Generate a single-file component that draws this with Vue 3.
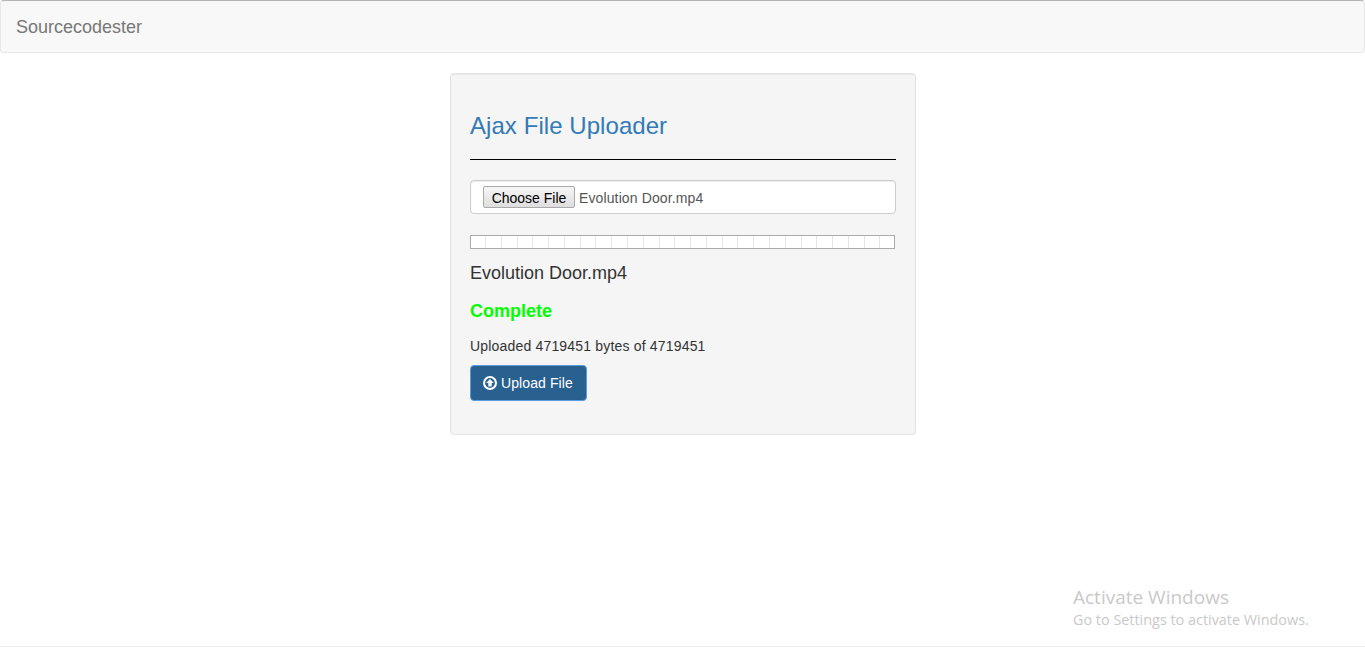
<script setup>
const fileName = 'Evolution Door.mp4'
</script>

<template>
  <div class="page">
    <nav class="navbar"><a class="brand">Sourcecodester</a></nav>
    <main class="content">
      <section class="well">
        <h3 class="title">Ajax File Uploader</h3>
        <hr class="rule" />
        <div class="file-input">
          <button class="choose" type="button">Choose File</button>
          <span class="chosen">{{ fileName }}</span>
        </div>
        <div class="progress"></div>
        <h4 class="name">{{ fileName }}</h4>
        <h4 class="status">Complete</h4>
        <p class="bytes">Uploaded 4719451 bytes of 4719451</p>
        <button class="upload" type="button">
          <svg class="icon" viewBox="0 0 14 14" width="14" height="14" aria-hidden="true">
            <circle cx="7" cy="7" r="5.95" fill="none" stroke="#fff" stroke-width="2.1" />
            <path d="M7 2.9 L10.9 7 L8.7 7 L8.7 10.6 L5.3 10.6 L5.3 7 L3.1 7 Z" fill="#fff" />
          </svg>
          <span>Upload File</span>
        </button>
      </section>
    </main>
    <aside class="activate">
      <div class="a-title">Activate Windows</div>
      <div class="a-sub">Go to Settings to activate Windows.</div>
    </aside>
  </div>
</template>

<style>
html, body { margin: 0; padding: 0; background: #fff; }
</style>

<style scoped>
.page {
  position: relative;
  height: 647px;
  box-sizing: border-box;
  overflow: hidden;
  border-bottom: 1px solid #eee;
  font-family: "Liberation Sans", Arial, sans-serif;
  font-size: 14px;
  color: #333;
  background: #fff;
}
.navbar {
  box-sizing: border-box;
  height: 53px;
  display: flex;
  align-items: center;
  padding: 0 15px;
  background: #f8f8f8;
  border: 1px solid #e7e7e7;
  border-top: 1px solid #b4b4b4;
  border-radius: 4px;
}
.brand { font-size: 18px; color: #777; line-height: 20px; }
.content { display: flex; justify-content: center; padding-top: 20px; padding-left: 1px; }
.well {
  box-sizing: border-box;
  width: 466px;
  height: 362px;
  padding: 19px;
  background: #f5f5f5;
  border: 1px solid #e3e3e3;
  border-radius: 4px;
  box-shadow: inset 0 1px 1px rgba(0,0,0,.05);
}
.title {
  margin: 20px 0 0;
  font-size: 24px;
  font-weight: 500;
  line-height: 26px;
  letter-spacing: .06px;
  color: #337ab7;
}
.rule { margin: 20px 0; height: 1px; border: 0; background: #000; }
.file-input {
  box-sizing: border-box;
  width: 426px;
  height: 34px;
  display: flex;
  align-items: center;
  padding: 6px 12px;
  background: #fff;
  border: 1px solid #ccc;
  border-radius: 4px;
  box-shadow: inset 0 1px 1px rgba(0,0,0,.075);
}
.choose {
  box-sizing: border-box;
  width: 92px;
  height: 22px;
  padding: 1px 0 0;
  font: 14px "Liberation Sans", Arial, sans-serif;
  color: #000;
  background: linear-gradient(#f6f6f6, #dedede);
  border: 1px solid #a9a9a9;
  border-radius: 2px;
}
.chosen { margin-left: 4px; padding-top: 2px; letter-spacing: .12px; color: #555; }
.progress {
  box-sizing: border-box;
  width: 425px;
  height: 14px;
  margin-top: 21px;
  border: 1px solid #aaa;
  background-color: #fff;
  background-image: repeating-linear-gradient(to right, #fff 0, #fff 14px, #e6e6e6 14px, #e6e6e6 15px, #fff 15px, #fff 15.78px);
}
.name { margin: 14px 0 0; font-size: 18px; font-weight: 500; line-height: 20px; color: #333; }
.status { margin: 18px 0 0; font-size: 18px; font-weight: 700; line-height: 20px; color: #0f0; }
.bytes { margin: 15px 0 0; line-height: 20px; letter-spacing: .18px; color: #333; }
.upload {
  box-sizing: border-box;
  display: flex;
  align-items: center;
  gap: 4px;
  width: 117px;
  height: 36px;
  margin-top: 9px;
  padding: 0 12px;
  font: 14px "Liberation Sans", Arial, sans-serif;
  letter-spacing: .1px;
  color: #fff;
  background: #286090;
  border: 1px solid #5b9ae0;
  border-radius: 4px;
}
.icon { flex: none; }
.activate {
  position: absolute;
  left: 1073px;
  top: 585px;
  font-family: "Open Sans", "Noto Sans", sans-serif;
  color: #c9c9c9;
}
.a-title { font-size: 19px; line-height: 24px; }
.a-sub { font-size: 14.4px; line-height: 22px; }
</style>
